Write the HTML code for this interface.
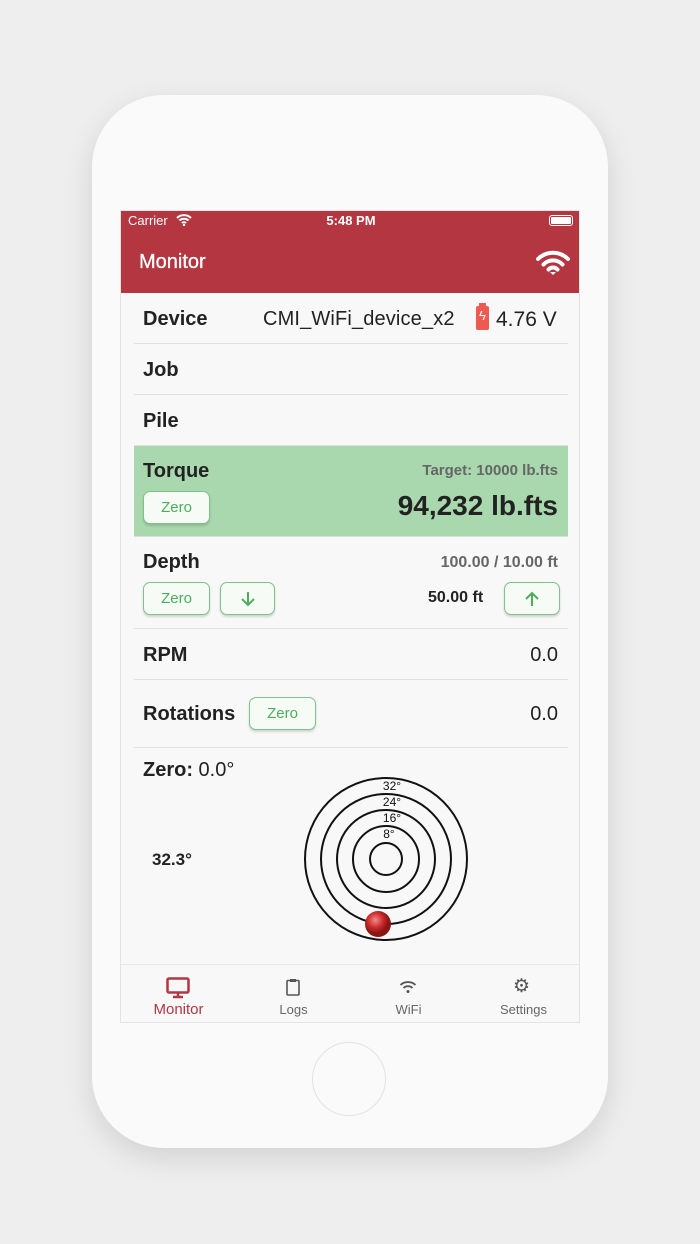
<!DOCTYPE html>
<html><head><style>
*{margin:0;padding:0;box-sizing:border-box}
body{width:700px;height:1244px;background:#eeeeee;font-family:"Liberation Sans",sans-serif;position:relative;overflow:hidden}
.phone{position:absolute;left:92px;top:95px;width:516px;height:1053px;background:#fafafa;border-radius:72px;box-shadow:0 10px 30px rgba(0,0,0,.12)}
.screen{position:absolute;left:120px;top:210px;width:460px;height:813px;background:#f8f8f8;overflow:hidden;border:1px solid #e4e4e4}
.a{position:absolute}
.hdr{left:0;top:0;width:460px;height:82px;background:#b33641;color:#fff}
.row{left:13px;width:434px;border-bottom:1px solid #e0e0e0}
.lbl{font-weight:bold;font-size:20px;color:#222}
.btn{position:absolute;height:33px;border:1px solid #7cc487;border-radius:7px;background:#f6fbf6;color:#4cae5b;font-size:15px;text-align:center;line-height:31px;box-shadow:0 2px 2px rgba(0,0,0,.15)}
.btn svg{margin-top:7px}
.val{font-size:20px;color:#222}
.tab{position:absolute;top:30px;width:115px;text-align:center;font-size:13px;color:#666}
</style></head><body>
<div class="phone"></div>
<div class="a" style="left:312px;top:1042px;width:74px;height:74px;border-radius:50%;border:1px solid #e2e2e2;background:#fafafa"></div>
<div class="screen">
 <div class="a hdr">
  <div class="a" style="left:7px;top:2px;font-size:13px">Carrier</div>
  <svg class="a" style="left:55px;top:3px" width="16" height="12" viewBox="0 0 16 12"><path d="M1 4a10 10 0 0 1 14 0M3.5 6.5a6.5 6.5 0 0 1 9 0M6 9a3 3 0 0 1 4 0" stroke="#fff" stroke-width="2" fill="none"/><circle cx="8" cy="11" r="1.2" fill="#fff"/></svg>
  <div class="a" style="left:0;width:460px;text-align:center;top:2px;font-size:13px;font-weight:bold">5:48 PM</div>
  <div class="a" style="left:428px;top:4px;width:24px;height:11px;border:1px solid #fff;border-radius:3px;padding:1px"><div style="background:#fff;width:100%;height:100%;border-radius:1px"></div></div>
  <div class="a" style="left:18px;top:40px;font-size:20px;-webkit-text-stroke:0.3px #fff">Monitor</div>
  <svg class="a" style="left:414px;top:37px" width="36" height="28" viewBox="0 0 36 28"><path d="M3 11a21 21 0 0 1 30 0M8.5 16.5a13 13 0 0 1 19 0M13.5 21.5a6 6 0 0 1 9 0" stroke="#fff" stroke-width="4" fill="none" stroke-linecap="round"/><path d="M15 24l3 3 3-3z" fill="#fff"/></svg>
 </div>
 <div class="a row" style="top:83px;height:50px"><div class="a lbl" style="left:9px;top:14px">Device</div>
  <div class="a val" style="left:129px;top:14px;font-size:20px;letter-spacing:0.15px">CMI_WiFi_device_x2</div>
  <div class="a" style="left:342px;top:12px;width:13px;height:24px;background:#ee5a52;border-radius:2px"></div>
  <div class="a" style="left:345px;top:9px;width:7px;height:4px;background:#ee5a52"></div>
  <div class="a" style="left:345px;top:14px;color:#fff;font-size:13px">ϟ</div>
  <div class="a val" style="left:362px;top:14px;font-size:21px">4.76 V</div></div>
 <div class="a row" style="top:133px;height:51px"><div class="a lbl" style="left:9px;top:15px">Job</div></div>
 <div class="a row" style="top:184px;height:51px"><div class="a lbl" style="left:9px;top:15px">Pile</div></div>
 <div class="a" style="left:13px;top:235px;width:434px;height:91px;background:#a9d8ae;border-bottom:1px solid #ddd">
  <div class="a lbl" style="left:9px;top:14px">Torque</div>
  <div class="a" style="right:10px;top:16px;font-size:15px;font-weight:bold;color:#666">Target: 10000 lb.fts</div>
  <div class="btn" style="left:9px;top:45px;width:67px">Zero</div>
  <div class="a" style="right:10px;top:44px;font-size:28px;font-weight:bold;color:#222">94,232 lb.fts</div>
 </div>
 <div class="a row" style="top:327px;height:91px">
  <div class="a lbl" style="left:9px;top:13px">Depth</div>
  <div class="a" style="right:10px;top:16px;font-size:16px;font-weight:bold;color:#666">100.00 / 10.00 ft</div>
  <div class="btn" style="left:9px;top:44px;width:67px">Zero</div>
  <div class="btn" style="left:86px;top:44px;width:55px"><svg width="18" height="18" viewBox="0 0 18 18"><path d="M9 2v13M3 9l6 6 6-6" stroke="#4cae5b" stroke-width="2" fill="none"/></svg></div>
  <div class="a" style="left:294px;top:51px;font-size:16px;font-weight:bold;color:#222">50.00 ft</div>
  <div class="btn" style="left:370px;top:44px;width:56px"><svg width="18" height="18" viewBox="0 0 18 18"><path d="M9 16V3M3 9l6-6 6 6" stroke="#4cae5b" stroke-width="2" fill="none"/></svg></div>
 </div>
 <div class="a row" style="top:418px;height:51px"><div class="a lbl" style="left:9px;top:15px">RPM</div><div class="a val" style="right:10px;top:15px">0.0</div></div>
 <div class="a row" style="top:469px;height:68px"><div class="a lbl" style="left:9px;top:23px">Rotations</div>
  <div class="btn" style="left:115px;top:17px;width:67px">Zero</div><div class="a val" style="right:10px;top:23px">0.0</div></div>
 <div class="a" style="left:22px;top:548px;font-size:20px;color:#222"><b>Zero:</b> 0.0°</div>
 <div class="a" style="left:31px;top:639px;font-size:17px;font-weight:bold;color:#222">32.3°</div>
 <svg class="a" style="left:180px;top:563px" width="170" height="170" viewBox="0 0 170 170">
  <g fill="none" stroke="#111" stroke-width="2"><circle cx="85" cy="85" r="81"/><circle cx="85" cy="85" r="65"/><circle cx="85" cy="85" r="49"/><circle cx="85" cy="85" r="33"/><circle cx="85" cy="85" r="16"/></g>
  <g font-size="12" text-anchor="middle" fill="#111" font-family="Liberation Sans"><text x="91" y="16">32°</text><text x="91" y="32">24°</text><text x="91" y="48">16°</text><text x="88" y="64">8°</text></g>
  <defs><radialGradient id="g" cx=".4" cy=".35"><stop offset="0" stop-color="#f08a8a"/><stop offset=".6" stop-color="#cc2a2a"/><stop offset="1" stop-color="#8a1515"/></radialGradient></defs>
  <circle cx="77" cy="150" r="13" fill="url(#g)"/>
 </svg>
 <div class="a" style="left:0;top:753px;width:460px;height:60px;border-top:1px solid #e8e8e8;background:#f8f8f8">
  <svg class="a" style="left:45px;top:12px" width="24" height="22" viewBox="0 0 24 22"><rect x="1.5" y="1.5" width="21" height="14" rx="1.5" fill="none" stroke="#b33641" stroke-width="2.5"/><path d="M12 16v3M7 20h10" stroke="#b33641" stroke-width="2.5"/></svg>
  <div class="tab" style="left:0;color:#b33641;font-size:15px;top:36px">Monitor</div>
  <svg class="a" style="left:165px;top:13px" width="14" height="18" viewBox="0 0 14 18"><rect x="1" y="2.5" width="12" height="14.5" rx="1" fill="none" stroke="#555" stroke-width="1.6"/><rect x="4" y="1" width="6" height="3" fill="#555"/></svg>
  <div class="tab" style="left:115px;top:37px">Logs</div>
  <svg class="a" style="left:278px;top:15px" width="18" height="14" viewBox="0 0 18 14"><path d="M1.5 5a11 11 0 0 1 15 0M4.5 8a6.5 6.5 0 0 1 9 0" stroke="#555" stroke-width="1.8" fill="none"/><circle cx="9" cy="11.5" r="1.5" fill="#555"/></svg>
  <div class="tab" style="left:230px;top:37px">WiFi</div>
  <div class="a" style="left:392px;top:10px;font-size:19px;color:#555">⚙</div>
  <div class="tab" style="left:345px;top:37px">Settings</div>
 </div>
</div>
</body></html>
